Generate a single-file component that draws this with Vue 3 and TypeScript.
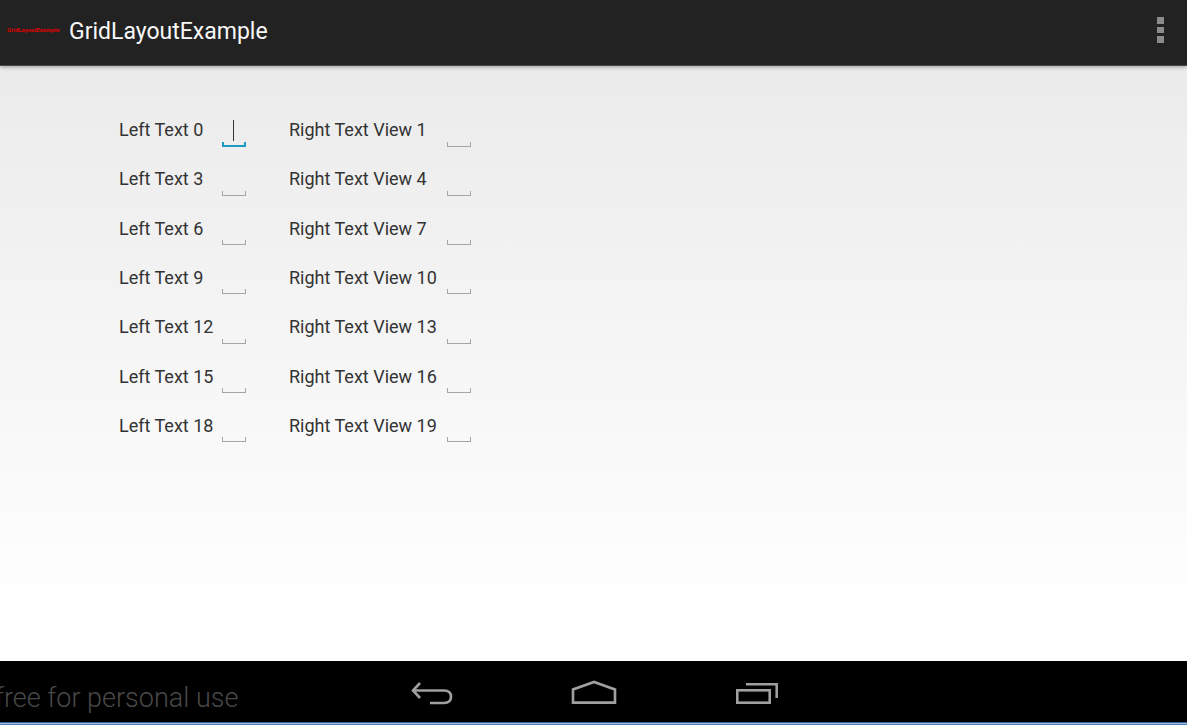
<script setup lang="ts">
import { ref } from 'vue'

interface Row {
  left: number
  right: number
}

const rows: Row[] = Array.from({ length: 7 }, (_, i) => ({ left: i * 3, right: i * 3 + 1 }))
const leftValues = ref<string[]>(rows.map(() => ''))
const rightValues = ref<string[]>(rows.map(() => ''))
</script>

<template>
  <div class="screen">
    <header class="action-bar">
      <span class="app-icon" aria-hidden="true">GridLayoutExample</span>
      <h1 class="title">GridLayoutExample</h1>
      <button class="overflow" type="button" aria-label="More options">
        <svg width="7" height="26" viewBox="0 0 7 26" fill="#8b8b8b">
          <rect width="7" height="7" />
          <rect y="10" width="7" height="6" />
          <rect y="19" width="7" height="7" />
        </svg>
      </button>
    </header>

    <main class="content">
      <form class="grid" @submit.prevent>
        <div v-for="(row, i) in rows" :key="row.left" class="row">
          <label class="label" :for="`field-${row.left}`">Left Text {{ row.left }}</label>
          <span class="field">
            <input
              :id="`field-${row.left}`"
              v-model="leftValues[i]"
              class="input"
              :class="{ active: i === 0 }"
              type="text"
            />
            <span v-if="i === 0" class="caret"></span>
          </span>
          <label class="label" :for="`field-${row.right}`">Right Text View {{ row.right }}</label>
          <span class="field">
            <input :id="`field-${row.right}`" v-model="rightValues[i]" class="input" type="text" />
          </span>
        </div>
      </form>
    </main>

    <nav class="nav-bar">
      <span class="watermark">free for personal use</span>
      <button class="nav-button" type="button" aria-label="Back">
        <svg width="44" height="28" viewBox="0 0 44 28" fill="none" stroke="#a0a0a0" stroke-width="2.6">
          <path d="M10 5 L3 12.5 L10 20" />
          <path d="M3 12.5 H34 Q41 12.5 41 18.8 Q41 25 34 25 H20" />
        </svg>
      </button>
      <button class="nav-button" type="button" aria-label="Home">
        <svg width="46" height="28" viewBox="0 0 46 28" fill="none" stroke="#a0a0a0" stroke-width="2.6">
          <path d="M2 24.6 V11.5 L23 4 L44 11.5 V24.6 Z" />
        </svg>
      </button>
      <button class="nav-button" type="button" aria-label="Recent apps">
        <svg width="44" height="28" viewBox="0 0 44 28" fill="none" stroke="#a0a0a0" stroke-width="2.6">
          <rect x="3.3" y="12.3" width="32.4" height="12.4" />
          <path d="M12 6.3 H42.7 V20" />
        </svg>
      </button>
    </nav>
    <div class="edge"></div>
  </div>
</template>

<style>
body {
  margin: 0;
}
</style>

<style scoped>
.screen {
  display: flex;
  flex-direction: column;
  min-height: 100vh;
  font-family: Roboto, "Noto Sans", sans-serif;
}

.action-bar {
  display: flex;
  align-items: center;
  box-sizing: border-box;
  height: 66px;
  padding: 0 0 5px 7px;
  background: #222;
  border-bottom: 1px solid #4a4a4a;
  box-shadow: 0 1px 4px rgba(0, 0, 0, 0.35);
  z-index: 1;
}

.app-icon {
  width: 62px;
  color: #e00000;
  font-size: 6px;
  line-height: 8px;
  font-weight: 700;
}

.title {
  margin: 0;
  padding-top: 4px;
  color: #f8f8f8;
  font-size: 23px;
  line-height: 32px;
  font-weight: 400;
}

.overflow {
  display: flex;
  align-items: center;
  justify-content: center;
  width: 54px;
  height: 56px;
  margin-left: auto;
  padding: 0;
  border: 0;
  background: none;
}

.content {
  flex: 1;
  padding: 39px 24px 24px 119px;
  background: linear-gradient(#ebebeb, #fff 92%);
}

.grid {
  display: grid;
  grid-template-rows: repeat(7, 1fr);
  height: 345px;
}

.row {
  display: grid;
  grid-template-columns: 103px 67px 158px 24px;
  align-items: center;
}

.label {
  padding-top: 1px;
  color: #333;
  font-size: 18px;
  line-height: 24px;
  white-space: nowrap;
}

.field {
  display: block;
  position: relative;
  width: 24px;
  height: 34px;
}

.input {
  --line: #a5a5a5;
  --weight: 1px;
  display: block;
  box-sizing: border-box;
  width: 24px;
  height: 34px;
  padding: 0 4px;
  border: 0;
  outline: 0;
  background:
    linear-gradient(var(--line), var(--line)) bottom / 100% var(--weight) no-repeat,
    linear-gradient(var(--line), var(--line)) left bottom / var(--weight) 5px no-repeat,
    linear-gradient(var(--line), var(--line)) right bottom / var(--weight) 5px no-repeat;
  color: #333;
  font: inherit;
}

.input.active {
  --line: #1a9bc0;
  --weight: 2px;
}

.caret {
  position: absolute;
  left: 11px;
  top: 7px;
  width: 1px;
  height: 21px;
  background: #333;
}

.nav-bar {
  position: relative;
  display: flex;
  align-items: center;
  justify-content: center;
  height: 61px;
  overflow: hidden;
  background: #000;
}

.edge {
  box-sizing: border-box;
  height: 3px;
  background: #a3c0e6;
  border-top: 1px solid #3c5f92;
  border-bottom: 1px solid #4a78b8;
}

.watermark {
  position: absolute;
  left: -5px;
  top: 18px;
  color: #484848;
  font-size: 27px;
  line-height: 38px;
  font-weight: 300;
  white-space: nowrap;
}

.nav-button {
  display: flex;
  align-items: center;
  justify-content: center;
  width: 162px;
  height: 60px;
  padding: 0;
  border: 0;
  background: none;
}
</style>
